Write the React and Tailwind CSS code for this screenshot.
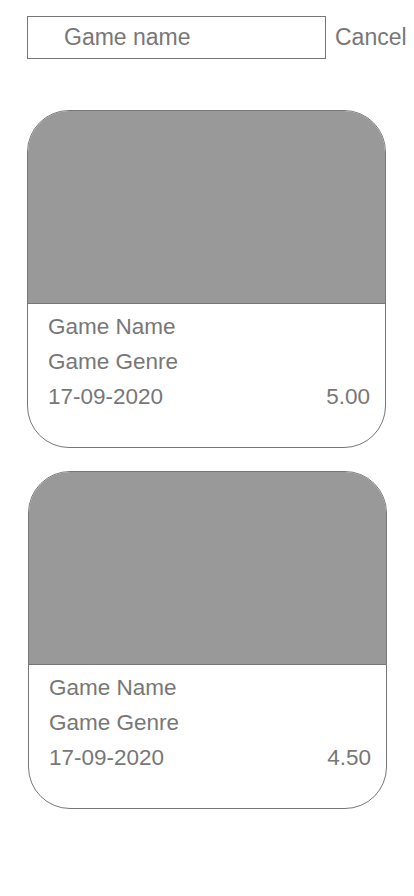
import React from 'react';

const games = [
  { name: 'Game Name', genre: 'Game Genre', date: '17-09-2020', rating: '5.00' },
  { name: 'Game Name', genre: 'Game Genre', date: '17-09-2020', rating: '4.50' },
];

function GameCard({ game, shift }) {
  return (
    <div className={`w-[359px] rounded-[42px] border border-[#777] overflow-hidden bg-white ${shift ? 'ml-[28px]' : 'ml-[27px]'}`}>
      <div className="h-[193px] bg-[#999] border-b border-[#777]" />
      <div className="pl-[20px] pr-[15px] pt-[5px] pb-[33px] text-[22.5px] leading-[35px] text-[#777]">
        <p>{game.name}</p>
        <p>{game.genre}</p>
        <div className="flex justify-between">
          <span>{game.date}</span>
          <span>{game.rating}</span>
        </div>
      </div>
    </div>
  );
}

export default function App() {
  return (
    <div className="w-[414px] min-h-[896px] bg-white" style={{ fontFamily: '"Liberation Sans", Arial, sans-serif' }}>
      <div className="flex items-center pt-[16px]">
        <div className="ml-[27px] w-[299px] h-[43px] border border-[#777] flex items-center pl-[36px] text-[23px] text-[#777]">
          Game name
        </div>
        <span className="ml-[9px] text-[23px] text-[#777]">Cancel</span>
      </div>
      <div className="flex flex-col gap-[23px] pt-[51px]">
        {games.map((g, i) => (
          <GameCard key={i} game={g} shift={i === 1} />
        ))}
      </div>
    </div>
  );
}
